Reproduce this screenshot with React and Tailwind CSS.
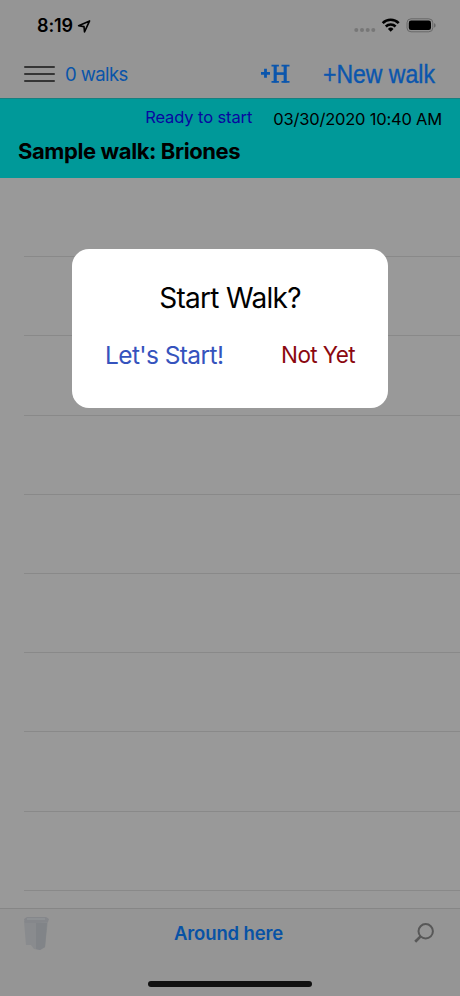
// App.jsx
import { useState } from 'react';

const EMPTY_ROWS = 10;

function StatusBar() {
  return (
    <div className="flex h-[50px] items-start justify-between pl-[37px] pr-[24px] pt-[13px]">
      <div className="flex items-center gap-[4px]">
        <span className="text-[18px] font-semibold leading-[26px] tracking-[-0.1px]">8:19</span>
        <svg className="h-[13px] w-[14px]" viewBox="0 0 14 13" fill="none">
          <path d="M12.6.9 1.6 5.7l5.4.9.5 5.3z" stroke="#000" strokeWidth="1.6" strokeLinejoin="round" />
        </svg>
      </div>
      <svg className="h-[26px] w-[82px]" viewBox="354 13 82 26">
        {/* cell dots */}
        <g fill="#777">
          <circle cx="356.3" cy="30" r="2" />
          <circle cx="362" cy="30" r="2" />
          <circle cx="367.7" cy="30" r="2" />
          <circle cx="373.3" cy="30" r="2" />
        </g>
        {/* wifi */}
        <g fill="none" stroke="#000" strokeWidth="2.6">
          <path d="M382.7 23.1a11.2 11.2 0 0 1 16 0" />
          <path d="M385.8 26.5a7 7 0 0 1 9.8 0" />
        </g>
        <path d="M387.9 28.9a4 4 0 0 1 5.6 0l-2.8 2.8z" />
        {/* battery */}
        <rect x="407" y="18.8" width="25.8" height="13" rx="4" fill="none" stroke="#686868" />
        <rect x="408.8" y="20.6" width="22.2" height="9.4" rx="2.3" />
        <path d="M434 23.2c2.2.6 2.2 3.8 0 4.4z" fill="#686868" />
      </svg>
    </div>
  );
}

function Toolbar({ count }) {
  return (
    <div className="flex h-12 items-center pl-[24px] pr-[24px]">
      <button type="button" className="flex w-[31px] flex-col gap-[5px]">
        <span className="h-[2px] rounded bg-[#353535]" />
        <span className="h-[2px] rounded bg-[#353535]" />
        <span className="h-[2px] rounded bg-[#353535]" />
      </button>
      <span className="ml-[10px] text-[18.5px] leading-[26px] tracking-[-0.6px] text-[#0954a9]">{count} walks</span>
      <button type="button" className="ml-auto">
        <svg className="h-[20px] w-[30px]" viewBox="0 0 30 20" fill="none" stroke="#0b56ad">
          <path d="M1 9.3h9M5.5 4.8v9" strokeWidth="2.8" />
          <path d="M15.2 1.5v17M25.2 1.5v17" strokeWidth="3.1" />
          <path d="M11.5 1.6h7.4M21.5 1.6h8M11.5 17.9h7.4M21.5 17.9h8" strokeWidth="1.9" />
          <path d="M15 9.6h10" strokeWidth="2.6" />
        </svg>
      </button>
      <button
        type="button"
        className="ml-[33px] w-[113px] whitespace-nowrap text-left font-['Liberation_Sans',sans-serif] text-[26px] text-[#0b56ad]"
      >
        <span className="inline-block origin-left scale-x-[0.885] [-webkit-text-stroke:0.4px_#0b56ad]">+New walk</span>
      </button>
    </div>
  );
}

function WalkRow({ title, status, date }) {
  return (
    <div className="h-[80px] border-t border-[#168080] bg-[#009999] pl-[18px] pr-[18px]">
      <div className="flex items-start justify-end gap-[21px] pt-[7px]">
        <span className="text-[16.5px] leading-[22px] tracking-[-0.11px] text-[#0808a0]">{status}</span>
        <span className="pt-[2px] text-[16.5px] leading-[22px] tracking-[-0.2px]">{date}</span>
      </div>
      <div className="mt-[7px] text-[22px] font-bold leading-[28px] tracking-[-0.41px]">{title}</div>
    </div>
  );
}

function BottomBar() {
  return (
    <div className="flex h-[88px] items-start border-t border-[#868686] bg-[#959595] pl-[22px] pr-[26px] pt-[7px]">
      <svg className="h-[36px] w-[28px]" viewBox="0 0 28 36">
        <path d="M2 5 26 4 23 31 18 34 12 33 9 29 4 29z" fill="#898b8e" />
        <path d="M14 7h11l-2 24-5 3-4-1z" fill="#818488" />
        <path d="M2 3 5 1h19l3 2-1 3-11 1H3z" fill="#85878b" />
        <path d="M5 3h18" stroke="#919396" strokeWidth="1.5" />
      </svg>
      <button
        type="button"
        className="ml-[124px] pt-[4px] text-[18.5px] font-semibold leading-[26px] tracking-[-0.15px] text-[#0852a5]"
      >
        Around here
      </button>
      <svg className="ml-auto mt-[7px] h-[20px] w-[20px]" viewBox="0 0 20 20" fill="none" stroke="#585858">
        <circle cx="11.7" cy="8.3" r="7.2" strokeWidth="2" />
        <path d="M6.6 13.4 1.2 18.8" strokeWidth="2.7" />
      </svg>
    </div>
  );
}

function StartDialog({ onClose }) {
  return (
    <div className="absolute left-[72px] top-[249px] h-[159px] w-[316px] rounded-[17px] bg-white px-[33px] pt-[31px]">
      <h2 className="text-center text-[28px] leading-[36px] tracking-[-0.7px]">Start Walk?</h2>
      <div className="mt-[21px] flex items-center justify-between leading-[36px]">
        <button type="button" className="text-[24.5px] tracking-[-0.6px] text-[#3553bd]" onClick={onClose}>
          Let's Start!
        </button>
        <button type="button" className="text-[22.5px] tracking-[-0.6px] text-[#8b080f]" onClick={onClose}>
          Not Yet
        </button>
      </div>
    </div>
  );
}

export default function App() {
  const [open, setOpen] = useState(true);

  return (
    <div className="relative flex h-[996px] w-[460px] flex-col overflow-hidden bg-[#959595] font-[Inter,sans-serif] text-black">
      <StatusBar />
      <Toolbar count={0} />
      <WalkRow title="Sample walk: Briones" status="Ready to start" date="03/30/2020 10:40 AM" />

      {/* empty list */}
      <div className="min-h-0 flex-1 overflow-hidden bg-[#999999] pl-[24px]">
        {Array.from({ length: EMPTY_ROWS }, (_, i) => (
          <div key={i} className="h-[79.2px] border-b border-[#898989]" />
        ))}
      </div>

      <BottomBar />
      {/* home indicator */}
      <div className="absolute bottom-[9px] left-[148px] h-[6px] w-[164px] rounded-full bg-[#111]" />

      {open && <StartDialog onClose={() => setOpen(false)} />}
    </div>
  );
}
